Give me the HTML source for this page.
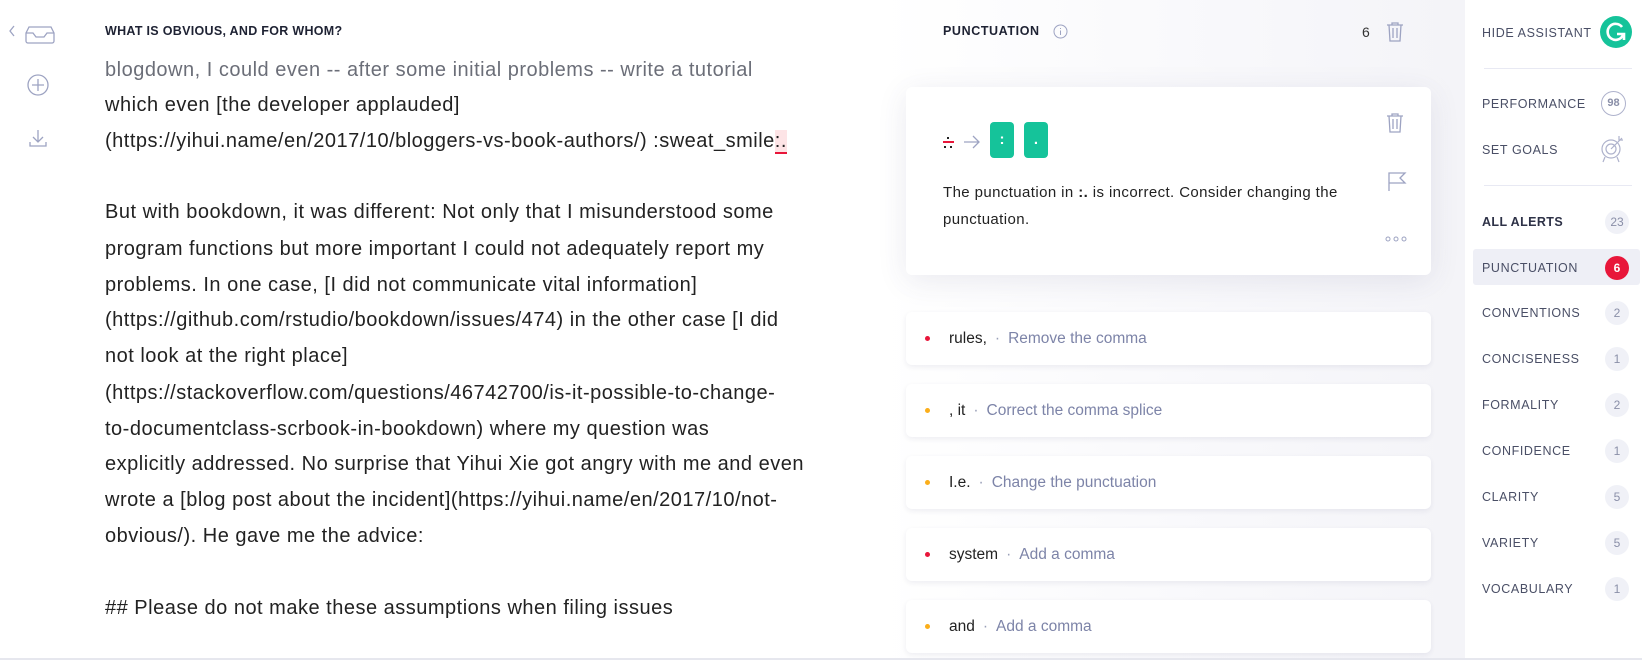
<!DOCTYPE html>
<html><head><meta charset="utf-8"><style>
*{margin:0;padding:0;box-sizing:border-box}
body{width:1642px;height:660px;overflow:hidden;background:#fff;font-family:"Liberation Sans",sans-serif;position:relative}
.abs{position:absolute}
.line{position:absolute;left:105px;font-size:20px;letter-spacing:0.5px;color:#222;white-space:nowrap;line-height:24px}
.hdr{font-size:12.5px;font-weight:bold;letter-spacing:0.3px;color:#1e2233}
.mid{position:absolute;left:880px;top:0;width:585px;height:660px;background:linear-gradient(90deg,#fff 0%,#f8f8fb 60%,#f4f4f8 100%)}
.card{position:absolute;left:906px;width:525px;background:#fff;border-radius:6px;box-shadow:0 2px 6px rgba(40,40,90,0.08)}
.item{height:53px;font-size:15.5px;color:#222;line-height:53px;padding-left:43px}
.item .dot{position:absolute;left:19px;top:24px;width:5px;height:5px;border-radius:50%}
.item .sep{color:#9aa0b8;margin:0 8px}
.item .s{color:#7d84a8}
.side{position:absolute;left:1465px;top:0;width:177px;height:660px;background:#fff}
.si{position:absolute;left:1482px;font-size:12.5px;letter-spacing:0.6px;color:#4a4f66;line-height:16px}
.badge{position:absolute;left:1605px;width:24px;height:24px;border-radius:50%;background:#f0f1f7;color:#8a8fa8;font-size:12px;text-align:center;line-height:24px}
</style></head><body>
<svg class="abs" style="left:4px;top:22px" width="56" height="130" viewBox="0 0 56 130" fill="none" stroke="#9da3c2" stroke-width="1.3">
<path d="M10 4 L6 9 L10 14"/>
<path d="M25 5 h22 l3 6 v8 a2 2 0 0 1 -2 2 h-24 a2 2 0 0 1 -2 -2 v-8z M22 11 h7 l3 4 h8 l3 -4 h7"/>
<circle cx="34" cy="63" r="10"/><path d="M34 57 v12 M28 63 h12"/>
<path d="M34 108 v12 M29 115 l5 5 l5 -5 M26 120 v4 h16 v-4"/>
</svg>
<div class="abs hdr" style="left:105px;top:24px">WHAT IS OBVIOUS, AND FOR WHOM?</div>
<div class="line" style="top:58px;color:#6b6e78">blogdown, I could even -- after some initial problems -- write a tutorial</div>
<div class="line" style="top:93px">which even [the developer applauded]</div>
<div class="line" style="top:129px">(https://yihui.name/en/2017/10/bloggers-vs-book-authors/) :sweat_smile<span style="background:#fde4e6;border-bottom:2px solid #e8163a">:.</span></div>
<div class="line" style="top:200px">But with bookdown, it was different: Not only that I misunderstood some</div>
<div class="line" style="top:237px">program functions but more important I could not adequately report my</div>
<div class="line" style="top:273px">problems. In one case, [I did not communicate vital information]</div>
<div class="line" style="top:308px">(https://github.com/rstudio/bookdown/issues/474) in the other case [I did</div>
<div class="line" style="top:344px">not look at the right place]</div>
<div class="line" style="top:381px">(https://stackoverflow.com/questions/46742700/is-it-possible-to-change-</div>
<div class="line" style="top:417px">to-documentclass-scrbook-in-bookdown) where my question was</div>
<div class="line" style="top:452px">explicitly addressed. No surprise that Yihui Xie got angry with me and even</div>
<div class="line" style="top:488px">wrote a [blog post about the incident](https://yihui.name/en/2017/10/not-</div>
<div class="line" style="top:524px">obvious/). He gave me the advice:</div>
<div class="line" style="top:596px">## Please do not make these assumptions when filing issues</div>

<div class="mid"></div>
<div class="abs hdr" style="left:943px;top:24px;letter-spacing:0.6px">PUNCTUATION</div>
<svg class="abs" style="left:1053px;top:24px" width="15" height="15" viewBox="0 0 15 15" fill="none" stroke="#9da3c2" stroke-width="1"><circle cx="7.5" cy="7.5" r="6.5"/><path d="M7.5 6.5v4.5M7.5 4v1"/></svg>
<div class="abs" style="left:1362px;top:24px;font-size:14px;color:#333">6</div>
<svg class="abs" style="left:1385px;top:21px" width="20" height="22" viewBox="0 0 20 22" fill="none" stroke="#9da3c2" stroke-width="1.3"><path d="M2 4h16M7 4V2h6v2M4 4l1 16h10l1-16M8 7v10M12 7v10"/></svg>

<div class="card" style="top:87px;height:188px;box-shadow:0 6px 30px rgba(60,60,110,0.10)">
<div class="abs" style="left:37px;top:50px;width:11px;height:12px">
<div class="abs" style="left:4px;top:0;width:2px;height:2px;background:#222"></div>
<div class="abs" style="left:0;top:4px;width:11px;height:2px;background:#e8163a"></div>
<div class="abs" style="left:1px;top:9px;width:2px;height:2px;background:#222"></div>
<div class="abs" style="left:7px;top:9px;width:2px;height:2px;background:#222"></div>
</div>
<svg class="abs" style="left:57px;top:48px" width="18" height="14" viewBox="0 0 18 14" fill="none" stroke="#9da3c2" stroke-width="1.3"><path d="M1 7h15M10 1l6 6l-6 6"/></svg>
<div class="abs" style="left:84px;top:35px;width:24px;height:36px;background:#15c39a;border-radius:4px;color:#fff;font-size:15px;font-weight:bold;text-align:center;line-height:36px">:</div>
<div class="abs" style="left:118px;top:35px;width:24px;height:36px;background:#15c39a;border-radius:4px;color:#fff;font-size:15px;font-weight:bold;text-align:center;line-height:36px">.</div>
<div class="abs" style="left:37px;top:92px;font-size:15px;letter-spacing:0.4px;color:#222;line-height:27px;width:420px">The punctuation in <b>:.</b> is incorrect. Consider changing the punctuation.</div>
<svg class="abs" style="left:479px;top:25px" width="20" height="22" viewBox="0 0 20 22" fill="none" stroke="#9da3c2" stroke-width="1.3"><path d="M2 4h16M7 4V2h6v2M4 4l1 16h10l1-16M8 7v10M12 7v10"/></svg>
<svg class="abs" style="left:481px;top:84px" width="20" height="22" viewBox="0 0 20 22" fill="none" stroke="#9da3c2" stroke-width="1.3"><path d="M2 20V2h16l-5 5l5 5H2"/></svg>
<svg class="abs" style="left:479px;top:148px" width="22" height="8" viewBox="0 0 22 8" fill="none" stroke="#9da3c2" stroke-width="1"><circle cx="3" cy="4" r="2"/><circle cx="11" cy="4" r="2"/><circle cx="19" cy="4" r="2"/></svg>
</div>

<div class="card item" style="top:312px"><span class="dot" style="background:#e8163a"></span>rules,<span class="sep">·</span><span class="s">Remove the comma</span></div>
<div class="card item" style="top:384px"><span class="dot" style="background:#fbae1a"></span>, it<span class="sep">·</span><span class="s">Correct the comma splice</span></div>
<div class="card item" style="top:456px"><span class="dot" style="background:#fbae1a"></span>I.e.<span class="sep">·</span><span class="s">Change the punctuation</span></div>
<div class="card item" style="top:528px"><span class="dot" style="background:#e8163a"></span>system<span class="sep">·</span><span class="s">Add a comma</span></div>
<div class="card item" style="top:600px"><span class="dot" style="background:#fbae1a"></span>and<span class="sep">·</span><span class="s">Add a comma</span></div>

<div class="side"></div>
<div class="si" style="top:25px">HIDE ASSISTANT</div>
<div class="abs" style="left:1600px;top:16px;width:32px;height:32px;border-radius:50%;background:#15c39a"></div>
<svg class="abs" style="left:1600px;top:16px" width="32" height="32" viewBox="0 0 32 32" fill="none" stroke="#fff" stroke-width="2.6"><path d="M22 11a8 8 0 1 0 1 8"/><path d="M17 18h7v6"/></svg>
<div class="abs" style="left:1484px;top:68px;width:148px;height:1px;background:#e8e9f3"></div>
<div class="si" style="top:96px">PERFORMANCE</div>
<div class="abs" style="left:1601px;top:91px;width:25px;height:25px;border-radius:50%;border:1.3px solid #aeb2cc;color:#8a8fa8;font-size:11px;font-weight:bold;text-align:center;line-height:23px">98</div>
<div class="si" style="top:142px">SET GOALS</div>
<svg class="abs" style="left:1599px;top:133px" width="26" height="30" viewBox="0 0 26 30" fill="none" stroke="#aeb2cc" stroke-width="1.2"><circle cx="12" cy="16" r="9"/><circle cx="12" cy="16" r="5"/><path d="M12 16L23 5M20 3v4h4M6 24l-2 5M18 24l2 5"/></svg>
<div class="abs" style="left:1484px;top:185px;width:148px;height:1px;background:#e8e9f3"></div>
<div class="si" style="top:214px;font-weight:bold;letter-spacing:0.4px;color:#2e3247">ALL ALERTS</div>
<div class="badge" style="top:210px">23</div>
<div class="abs" style="left:1473px;top:249px;width:167px;height:36px;background:#eeeff6;border-radius:3px"></div>
<div class="si" style="top:260px">PUNCTUATION</div>
<div class="badge" style="top:256px;background:#e8163a;color:#fff;font-weight:bold">6</div>
<div class="si" style="top:305px">CONVENTIONS</div><div class="badge" style="top:301px">2</div>
<div class="si" style="top:351px">CONCISENESS</div><div class="badge" style="top:347px">1</div>
<div class="si" style="top:397px">FORMALITY</div><div class="badge" style="top:393px">2</div>
<div class="si" style="top:443px">CONFIDENCE</div><div class="badge" style="top:439px">1</div>
<div class="si" style="top:489px">CLARITY</div><div class="badge" style="top:485px">5</div>
<div class="si" style="top:535px">VARIETY</div><div class="badge" style="top:531px">5</div>
<div class="si" style="top:581px">VOCABULARY</div><div class="badge" style="top:577px">1</div>
<div class="abs" style="left:0;top:658px;width:1642px;height:2px;background:#e6e7ee"></div>
</body></html>
